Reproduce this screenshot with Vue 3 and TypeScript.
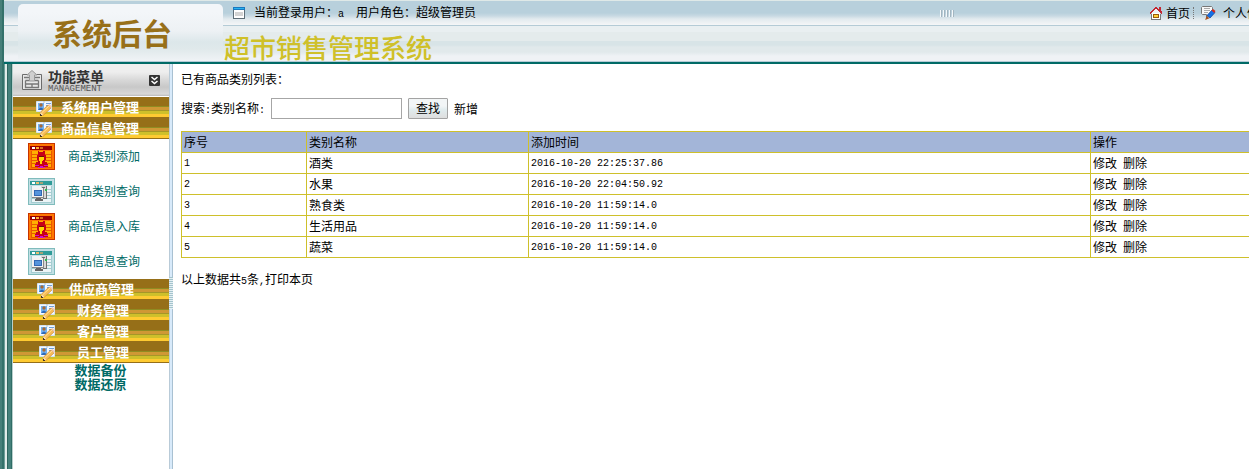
<script setup lang="ts">
import { ref } from 'vue'

interface Entry { label: string; kind: 'add' | 'search' }
interface Group { label: string; size: 'long' | 'mid' | 'short'; entries: Entry[] }
interface Category { id: number; name: string; created: string }

const keyword = ref('')

const groups: Group[] = [
  { label: '系统用户管理', size: 'long', entries: [] },
  {
    label: '商品信息管理',
    size: 'long',
    entries: [
      { label: '商品类别添加', kind: 'add' },
      { label: '商品类别查询', kind: 'search' },
      { label: '商品信息入库', kind: 'add' },
      { label: '商品信息查询', kind: 'search' },
    ],
  },
  { label: '供应商管理', size: 'mid', entries: [] },
  { label: '财务管理', size: 'short', entries: [] },
  { label: '客户管理', size: 'short', entries: [] },
  { label: '员工管理', size: 'short', entries: [] },
]

const rows: Category[] = [
  { id: 1, name: '酒类', created: '2016-10-20 22:25:37.86' },
  { id: 2, name: '水果', created: '2016-10-20 22:04:50.92' },
  { id: 3, name: '熟食类', created: '2016-10-20 11:59:14.0' },
  { id: 4, name: '生活用品', created: '2016-10-20 11:59:14.0' },
  { id: 5, name: '蔬菜', created: '2016-10-20 11:59:14.0' },
]
</script>

<template>
  <div class="page">
    <header class="header">
      <div class="logo">系统后台</div>
      <div class="head-main">
        <div class="topbar">
          <svg class="win-icon" width="12" height="12" viewBox="0 0 12 12" shape-rendering="crispEdges">
            <rect width="12" height="12" fill="#5f6f78" />
            <rect width="12" height="3" fill="#1878c0" />
            <rect x="1" y="1" width="10" height="1" fill="#28b4f0" />
            <rect x="1" y="3" width="10" height="8" fill="#fff" />
            <path d="M2 5h8v4H2z" fill="#d4d4d4" />
          </svg>
          <span class="user">当前登录用户：<span class="latin">a&nbsp;&nbsp;</span>用户角色：超级管理员</span>
          <svg class="grip" width="14" height="7" viewBox="0 0 14 7" shape-rendering="crispEdges">
            <path d="M0 0h1v7H0zM3 0h1v7H3zM6 0h1v7H6zM9 0h1v7H9zM12 0h1v7h-1z" fill="#f4f8fa" />
            <path d="M1 0h1v7H1zM4 0h1v7H4zM7 0h1v7H7zM10 0h1v7h-1zM13 0h1v7h-1z" fill="#a3b5c0" />
          </svg>
          <nav class="quick">
            <a href="#">
              <svg width="12" height="13" viewBox="0 0 12 13" shape-rendering="crispEdges">
                <path d="M2 6h8v6H2z" fill="#fff" />
                <path d="M1 7h1v6H1zM10 7h1v6h-1zM2 12h8v1H2z" fill="#777" />
                <path d="M5 0h2v1h1v1h1V0h2v4h1v3h-1V6h-1V5H9V4H8V3H7V2H5v1H4v1H3v1H2v1H1v1H0V5h1V4h1V3h1V2h1V1h1z" fill="#c32632" />
                <path d="M5 2h2v1h1v1h1v1h1v1H2V5h1V4h1V3h1z" fill="#eef1f4" />
                <path d="M3 7h6v4H3z" fill="#9b5a0c" />
                <path d="M4 8h4v2H4z" fill="#ffd23a" />
              </svg>
              <span>首页</span>
            </a>
            <i class="dots"></i>
            <a href="#" class="profile">
              <svg width="15" height="14" viewBox="0 0 15 14">
                <path d="M1.500.5h9l1 1v6l-1 1h-3l-2 3v-3h-4l-1-1v-6z" fill="#f8f8f8" stroke="#777" />
                <path d="M3 2.500h6M3 4.500h6M3 6.500h4" stroke="#aaa" />
                <path d="M6 9.500l5-5.500 3 2.500-5 5.500z" fill="#1470e8" stroke="#0d3d94" stroke-width=".7" />
                <path d="M10.500 4.500l1.500-1.500 2.500 2-1.300 2z" fill="#d82818" />
                <path d="M5.500 10l3 2.300-4.300 1.700z" fill="#a8501c" />
              </svg>
              <span>个人信息</span>
            </a>
          </nav>
        </div>
        <h1 class="title">超市销售管理系统</h1>
      </div>
    </header>

    <div class="body">
      <aside class="sidebar">
        <div class="menu-head">
          <svg width="20" height="20" viewBox="0 0 20 20">
            <path d="M7 4.500H.5v15h19v-15H13" fill="#e8e8e8" stroke="#6c6c6c" />
            <path d="M2 7.500h5M13 7.500h5M3.500 10.500h4M12.500 10.500h4M3.500 10.500v7h13v-7M3.500 14h13M10 14v3.500" fill="none" stroke="#777" stroke-width="1.300" />
            <path d="M10 .5l5 4.500h-2.500v6h-5V5H5z" fill="#cfcfcf" stroke="#999" />
          </svg>
          <div class="menu-name">
            <strong>功能菜单</strong>
            <small>MANAGEMENT</small>
          </div>
          <button class="collapse" type="button" aria-label="收起">
            <svg width="11" height="11" viewBox="0 0 11 11">
              <rect width="11" height="11" rx="1" fill="#333" />
              <path d="M2.500 2l3 2.500 3-2.500M2.500 6l3 2.500 3-2.500" fill="none" stroke="#fff" stroke-width="1.500" />
            </svg>
          </button>
        </div>

        <section v-for="g in groups" :key="g.label" class="group">
          <a href="#" class="bar" :class="g.size">
            <svg width="17" height="16" viewBox="0 0 17 16">
              <path d="M.5 1.500h7v1h1v-1h7v10H.5z" fill="#f4f9fe" stroke="#d3e2f3" />
              <rect x="2" y="3" width="6" height="7" fill="#6fb0f2" />
              <circle cx="5" cy="5" r="1.700" fill="#a66a38" />
              <path d="M2 10q3-5 6 0z" fill="#2e69b8" />
              <path d="M10 3.500h5M10 5.500h3" stroke="#6f9fd8" />
              <path d="M4.500 12L12 5l3 3-7.500 7-3.500.5z" fill="#f7bd58" stroke="#c67f2a" stroke-width=".6" />
              <path d="M6 12.500l7-6.500" stroke="#ffe09a" />
              <path d="M4.500 12l3 3-3.500.7z" fill="#f8ddb0" />
              <path d="M12 5l1.500-1L16 6.500 15 8z" fill="#f5c9b0" />
              <path d="M4 14h1v1h1v1H4z" fill="#443426" />
            </svg>
            <span>{{ g.label }}</span>
          </a>
          <ul v-if="g.entries.length" class="entries">
            <li v-for="e in g.entries" :key="e.label">
              <a href="#">
                <svg v-if="e.kind === 'add'" width="27" height="27" viewBox="0 0 27 27" shape-rendering="crispEdges">
                  <rect width="27" height="27" fill="#c63300" />
                  <rect x="1" y="1" width="25" height="25" fill="#ff7700" />
                  <rect x="3" y="8" width="21" height="17" fill="#ffb000" />
                  <path d="M3 11h21v1H3zM3 14h21v1H3zM3 17h21v1H3zM3 20h21v1H3zM3 24h21v1H3zM3 8h1v17H3zM23 8h1v17h-1z" fill="#e85a00" />
                  <rect x="2" y="3" width="22" height="4" fill="#990000" />
                  <path d="M4 4h3v2H4z" fill="#fff" />
                  <path d="M8 4h3v2H8z" fill="#ffb030" />
                  <path d="M12 4h3v2h-3z" fill="#d86a20" />
                  <path d="M10 8h1v1h4V8h2v4h1v5h-1v2h2v2h1v3H7v-3h1v-2h2v-2H9v-5h1z" fill="#c80018" />
                  <path d="M11 14h5v3h-1v1h-1v3h-2v-3h-1z" fill="#ffd800" />
                  <path d="M11 13h5v1h-5z" fill="#721000" />
                  <path d="M7 22h4v1H7zM16 22h4v1h-4zM10 24h2v-1h3v1h2v1h-7z" fill="#d010cc" />
                </svg>
                <svg v-else width="27" height="27" viewBox="0 0 27 27" shape-rendering="crispEdges">
                  <rect width="27" height="27" fill="#80bcbc" />
                  <rect x="1" y="1" width="25" height="25" fill="#c2dfe4" />
                  <rect x="3" y="8" width="21" height="17" fill="#edf5f7" />
                  <path d="M3 11h21v1H3zM3 14h21v1H3zM3 17h21v1H3zM3 20h21v1H3zM3 24h21v1H3zM3 8h1v17H3zM23 8h1v17h-1z" fill="#a5cdd1" />
                  <rect x="2" y="3" width="22" height="4" fill="#2f9c98" />
                  <path d="M4 4h3v2H4z" fill="#fff" />
                  <path d="M8 4h3v2H8z" fill="#e7bd72" />
                  <path d="M12 4h3v2h-3z" fill="#a6a276" />
                  <path d="M13 7h5v1h1v13h-6z" fill="#d8d8d8" />
                  <path d="M18 8h1v13h-4v-1h3zM14 9h3v1h-3z" fill="#707070" />
                  <path d="M17 11h2v2h-2z" fill="#30b850" />
                  <rect x="4" y="10" width="12" height="10" fill="#888" />
                  <rect x="4" y="10" width="11" height="9" fill="#f2f2f2" />
                  <rect x="6" y="12" width="8" height="6" fill="#3269b4" />
                  <rect x="7" y="13" width="6" height="4" fill="#5595dc" />
                  <path d="M8 20h5v1h2v2H7v-2h1z" fill="#666" />
                </svg>
                <span>{{ e.label }}</span>
              </a>
            </li>
          </ul>
        </section>

        <div class="data-links">
          <a href="#">数据备份</a>
          <a href="#">数据还原</a>
        </div>
      </aside>

      <div class="splitter"><i class="handle"></i></div>

      <main class="main">
        <p class="caption">已有商品类别列表：</p>
        <form class="search" @submit.prevent>
          <label for="keyword">搜索<span class="latin">:</span>类别名称<span class="latin">:</span></label>
          <input id="keyword" v-model="keyword" type="text" />
          <button type="submit">查找</button>
          <a href="#">新增</a>
        </form>
        <table>
          <colgroup>
            <col class="c-id" />
            <col class="c-name" />
            <col />
            <col class="c-act" />
          </colgroup>
          <thead>
            <tr><th>序号</th><th>类别名称</th><th>添加时间</th><th>操作</th></tr>
          </thead>
          <tbody>
            <tr v-for="r in rows" :key="r.id">
              <td class="latin">{{ r.id }}</td>
              <td>{{ r.name }}</td>
              <td class="latin">{{ r.created }}</td>
              <td><a href="#">修改</a><a href="#" class="remove">删除</a></td>
            </tr>
          </tbody>
        </table>
        <p class="total">以上数据共<span class="latin">{{ rows.length }}</span>条<span class="latin">,</span><a href="#">打印本页</a></p>
      </main>
    </div>
  </div>
</template>

<style>
body {
  margin: 0;
  background: #fff;
}
</style>

<style scoped>
.page {
  display: flex;
  flex-direction: column;
  min-height: 100vh;
  overflow: hidden;
  font-family: "Liberation Sans", "Noto Sans CJK SC", sans-serif;
  font-size: 12px;
  line-height: 16px;
  color: #000;
  background: linear-gradient(to right, #467f79 0 2px, #33716a 2px 4px, #6d9c96 4px 5px, #e0ebe8 5px 7px, #2d665f 7px 8px, #45817b 8px 11px, #2f6d66 11px 12px, #b9cfcc 12px 13px, #fff 13px);
}
a {
  color: inherit;
  text-decoration: none;
}
svg {
  display: block;
  flex: none;
}
.latin {
  font-family: "Liberation Mono", monospace;
  font-size: 10px;
}
.header {
  display: flex;
  margin-left: 4px;
  height: 61px;
  border-bottom: 2px solid #006a66;
  padding-bottom: 1px;
  background: linear-gradient(to bottom, #dfe9e8 0 1px, #b8d0dc 1px 13px, #c9dae3 16px, #e2eaee 19px, #f5f6f7 25px, #b4cbd6 25px 26px, #e9eff1 26px 32px, #e4ebec 32px 41px, #d8e4e7 41px 45px, #e1e9eb 47px 52px, #eff2f5 56px 61px, #b4cbd6 61px);
}
.logo {
  flex: none;
  box-sizing: border-box;
  width: 205px;
  margin: 4px 0 0 14px;
  padding-left: 34px;
  border-radius: 5px 5px 0 0;
  background: linear-gradient(to bottom, #f3f6f9 0 8px, #edf1f4 27px, #dce7ea 38px, #e0e9eb 45px, #f0f3f6);
  font-size: 30px;
  font-weight: 700;
  line-height: 62px;
  height: 57px;
  color: #987019;
  white-space: nowrap;
}
.head-main {
  flex: 1;
  min-width: 0;
}
.topbar {
  display: flex;
  align-items: center;
  height: 26px;
  padding-left: 10px;
  line-height: 18px;
  white-space: nowrap;
}
.topbar span {
  padding-top: 2px;
}
.user {
  margin-left: 9px;
}
.grip {
  margin-left: auto;
}
.quick {
  display: flex;
  align-items: center;
  margin: 0 -22px 0 196px;
}
.quick a {
  display: flex;
  align-items: center;
  gap: 4px;
}
.quick .profile {
  gap: 7px;
}
.dots {
  width: 0;
  height: 12px;
  margin: 0 7px 0 3px;
  border-left: 1px dotted #777;
}
.title {
  margin: 0;
  padding-left: 1px;
  font-size: 26px;
  font-weight: 500;
  line-height: 46px;
  height: 35px;
  color: #cfc029;
  white-space: nowrap;
}
.body {
  display: flex;
  flex: 1;
}
.sidebar {
  flex: none;
  width: 156px;
  margin-left: 13px;
}
.menu-head {
  display: flex;
  align-items: center;
  box-sizing: border-box;
  height: 33px;
  padding: 0 9px;
  border-bottom: 1px solid #fff;
  background: linear-gradient(to bottom, #eee 0 8px, #d8d8d8 16px, #c8c8c8 23px, #d8d8d8 30px, #bbb);
}
.menu-name {
  margin-left: 6px;
  padding-top: 3px;
  line-height: 14px;
}
.menu-name strong {
  display: block;
  font-size: 14px;
  color: #333;
}
.menu-name small {
  display: block;
  font-family: "Liberation Mono", monospace;
  font-size: 9px;
  line-height: 10px;
  color: #555;
}
.collapse {
  margin-left: auto;
  padding: 0;
  border: 0;
  background: none;
}
.bar {
  display: flex;
  align-items: center;
  box-sizing: border-box;
  height: 21px;
  font-size: 13px;
  font-weight: 700;
  color: #fff;
  background: linear-gradient(to bottom, #966f18 0 9px, #8f8c22 9px 10px, #cf9835 10px 13px, #a59728 13px 14px, #cec02b 14px 17px, #ffcb32 17px 20px, #966f18 20px);
}
.long {
  padding-left: 23px;
  gap: 8px;
}
.mid {
  padding-left: 24px;
  gap: 15px;
}
.short {
  padding-left: 26px;
  gap: 21px;
}
.entries {
  margin: 0;
  padding: 0;
  list-style: none;
}
.entries a {
  display: flex;
  align-items: center;
  gap: 13px;
  height: 35px;
  padding-left: 15px;
  color: #006a66;
}
.data-links {
  display: flex;
  flex-direction: column;
  align-items: center;
  padding: 1px 0 0 19px;
  font-size: 13px;
  font-weight: 700;
  line-height: 14px;
  color: #006a66;
}
.splitter {
  flex: none;
  width: 2px;
  border-left: 1px solid #b9cbd8;
  border-right: 1px solid #a9c1d2;
  background: #d8eafa;
}
.handle {
  display: block;
  height: 32px;
  margin: 213px -1px 0;
  background: repeating-linear-gradient(to bottom, #a4c4cd 0 1px, #e4eff4 1px 2px);
}
.main {
  flex: 1;
  min-width: 0;
  padding: 8px 0 0 8px;
}
.caption,
.total {
  margin: 0;
}
.search {
  display: flex;
  align-items: center;
  gap: 6px;
  margin: 10px 0 12px;
}
.search label,
.search a {
  padding-top: 2px;
}
.search input {
  box-sizing: border-box;
  width: 131px;
  height: 21px;
  padding: 1px 3px;
  border: 1px solid #a6a6a6;
  background: #fff;
  font: inherit;
}
.search button {
  box-sizing: border-box;
  width: 40px;
  height: 21px;
  padding: 1px 0 0;
  border: 1px solid #a3a3a3;
  border-radius: 1px;
  background: linear-gradient(to bottom, #f2f5f6 0 7px, #e0ebed 11px, #dedede);
  font: inherit;
  color: #000;
}
table {
  width: calc(100% + 20px);
  table-layout: fixed;
  border-collapse: collapse;
}
.c-id {
  width: 125px;
}
.c-name {
  width: 222px;
}
.c-act {
  width: 178px;
}
th,
td {
  box-sizing: border-box;
  height: 21px;
  padding: 2px 2px 0;
  border: 1px solid #cec02b;
  font-weight: 400;
  text-align: left;
  white-space: nowrap;
}
th {
  background: #a3b5d8;
}
.remove {
  margin-left: 6px;
}
.total {
  margin-top: 14px;
}
</style>
